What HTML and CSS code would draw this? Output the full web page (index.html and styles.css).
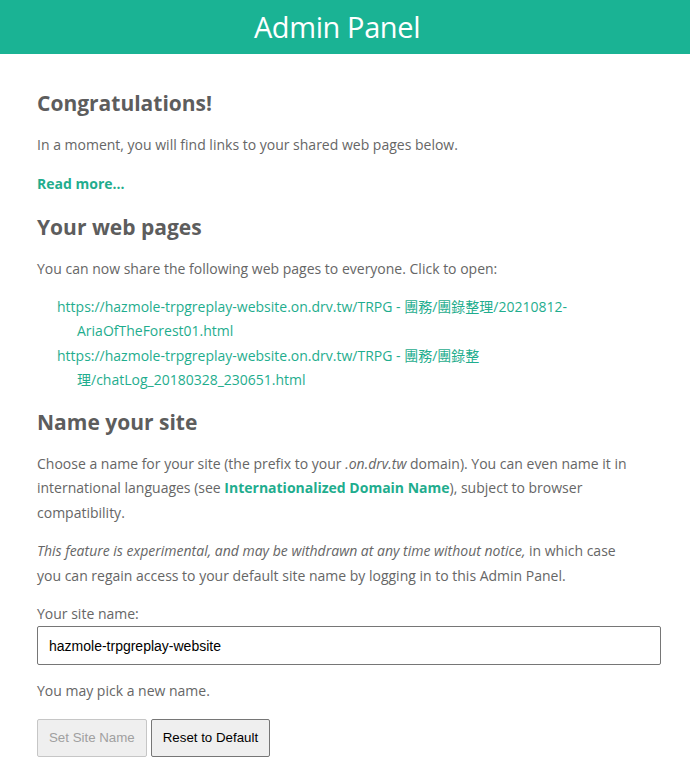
FILE: index.html
```html
<!DOCTYPE html>
<html>
<head>
<meta charset="utf-8">
<link rel="stylesheet" href="styles.css">
</head>
<body>
<header class="topbar"><h1 class="title">Admin Panel</h1></header>
<main class="content">
  <h2 class="heading first">Congratulations!</h2>
  <p class="text">In a moment, you will find links to your shared web pages below.</p>
  <p class="text"><a class="strong-link" href="#">Read more...</a></p>
  <h2 class="heading">Your web pages</h2>
  <p class="text">You can now share the following web pages to everyone. Click to open:</p>
  <ul class="links">
    <li><a href="#">https://hazmole-trpgreplay-website.on.drv.tw/TRPG - 團務/團錄整理/20210812-AriaOfTheForest01.html</a></li>
    <li><a href="#">https://hazmole-trpgreplay-website.on.drv.tw/TRPG - 團務/團錄整理/chatLog_20180328_230651.html</a></li>
  </ul>
  <h2 class="heading">Name your site</h2>
  <p class="text">Choose a name for your site (the prefix to your <em>.on.drv.tw</em> domain). You can even name it in international languages (see <a class="strong-link" href="#">Internationalized Domain Name</a>), subject to browser compatibility.</p>
  <p class="text"><em>This feature is experimental, and may be withdrawn at any time without notice,</em> in which case you can regain access to your default site name by logging in to this Admin Panel.</p>
  <label class="label" for="site">Your site name:</label>
  <input id="site" class="field" type="text" value="hazmole-trpgreplay-website">
  <p class="text hint">You may pick a new name.</p>
  <div class="actions">
    <button class="btn" disabled>Set Site Name</button>
    <button class="btn">Reset to Default</button>
  </div>
</main>
</body>
</html>
```
FILE: styles.css
```css
html, body { margin: 0; padding: 0; background: #fff; }
body { font-family: "Open Sans", "Noto Sans CJK TC", sans-serif; color: #666; font-size: 14px; }
.topbar { background: #1ab394; height: 54px; display: flex; align-items: center; justify-content: center; padding-right: 16px; }
.title { margin: 0; color: #fff; font-weight: 400; font-size: 29px; line-height: 54px; letter-spacing: -0.4px; }
.content { padding: 0 29px 0 37px; }
.heading { font-size: 21px; font-weight: 700; color: #5d5d5d; margin: 0; line-height: 30px; }
.heading.first { margin-top: 34px; }
.text { margin: 0; line-height: 24.5px; padding-right: 24px; }
.heading + .text { margin-top: 15px; }
.text + .text { margin-top: 14px; }
.text + .heading { margin-top: 16px; }
.links + .heading { margin-top: 14px; }
a { color: #1fad8e; text-decoration: none; }
.strong-link { font-weight: 700; }
.links { list-style: none; margin: 13px 0 0; padding: 0 0 0 40px; }
.links li { text-indent: -20px; line-height: 24.5px; }
.label { display: block; margin-top: 14px; line-height: 24px; }
.field { display: block; box-sizing: border-box; width: 100%; height: 39px; margin-top: 0; padding: 0 11px; border: 1px solid #767676; border-radius: 2px; font-family: Arial, "Liberation Sans", sans-serif; font-size: 14px; color: #000; }
.hint { margin-top: 14px; }
.actions { display: flex; gap: 4px; margin-top: 15px; }
.btn { height: 38px; padding: 0 11px; font-family: Arial, "Liberation Sans", sans-serif; font-size: 13.3px; background: #efefef; border: 1px solid #767676; border-radius: 2px; color: #000; }
.btn:disabled { color: #a0a0a0; border-color: #c6c6c6; background: #efefef; }
```
